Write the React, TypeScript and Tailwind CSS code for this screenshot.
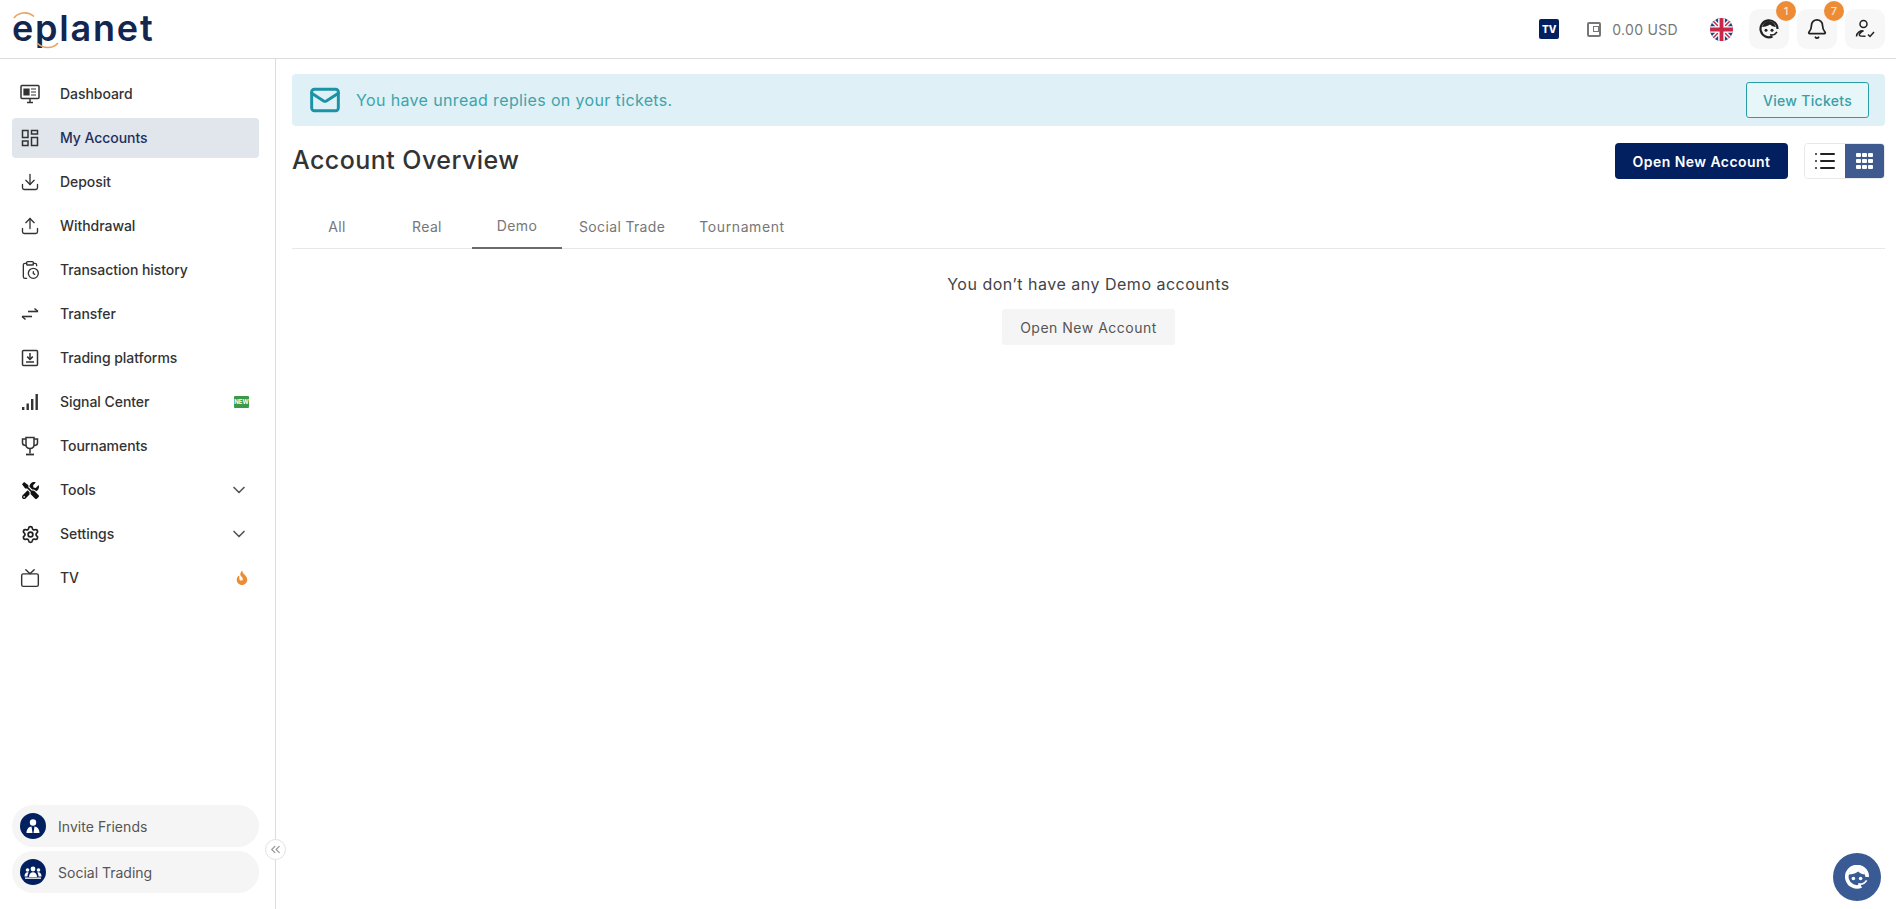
import { ChevronDown, ChevronsLeft, Download, Upload, ClipboardClock, Settings, Tv, Mail, List, Bell } from "lucide-react";
import { FaTools, FaFire } from "react-icons/fa";

const DashIcon = () => (
  <svg width="20" height="20" viewBox="0 0 20 20" fill="none" stroke="#333" strokeWidth="1.5">
    <rect x="1" y="1.5" width="18" height="13" rx="1" />
    <path d="M7 18.500h6M10 15v3" />
    <path d="M4 5h5v6H4z M11 5h5 M11 8h5 M11 11h5" fill="#333" strokeWidth="1.2" />
  </svg>
);

const AccountsIcon = () => (
  <svg width="18" height="18" viewBox="0 0 18 18" fill="none" stroke="#333" strokeWidth="1.5">
    <rect x="1.500" y="1.500" width="5.500" height="7" />
    <rect x="10.500" y="1.500" width="6" height="3.500" />
    <rect x="1.500" y="12" width="5.500" height="4.500" />
    <rect x="10.500" y="8.500" width="6" height="8" />
  </svg>
);

const TransferIcon = () => (
  <svg width="18" height="14" viewBox="0 0 18 14" fill="none" stroke="#333" strokeWidth="1.600">
    <path d="M7 4.500h10" />
    <path d="M13.500 1.500l3.500 3" />
    <path d="M1 9.500h10" />
    <path d="M4.500 12.500l-3.500-3" />
  </svg>
);

const PlatformIcon = () => (
  <svg width="18" height="18" viewBox="0 0 18 18" fill="none" stroke="#333" strokeWidth="1.500">
    <rect x="1.500" y="1.500" width="15" height="15" rx="1" />
    <path d="M9 4v6" />
    <path d="M6.200 7.600L9 10.400l2.800-2.800" />
    <path d="M5 13h8" />
  </svg>
);

const SignalBars = () => (
  <svg width="18" height="18" viewBox="0 0 18 18" fill="#333">
    <rect x="1" y="14" width="2.400" height="3" />
    <rect x="5.500" y="10.500" width="2.400" height="6.500" />
    <rect x="10" y="6" width="2.400" height="11" />
    <rect x="14.500" y="1" width="2.400" height="16" />
  </svg>
);

const TrophyIcon = () => (
  <svg width="18" height="20" viewBox="0 0 18 20" fill="none" stroke="#333" strokeWidth="1.500">
    <path d="M5 1.500h8v7c0 2.400-1.800 4-4 4s-4-1.600-4-4z" />
    <path d="M5 3H1.500v4c0 1.500 1.500 2.500 3.500 2.500" />
    <path d="M13 3h3.500v4c0 1.500-1.500 2.500-3.500 2.500" />
    <path d="M9 12.500v5" />
    <path d="M5 18.500h8" strokeWidth="1.800" />
  </svg>
);

const NewBadge = () => (
  <span className="flex h-[12px] w-[15px] items-center justify-center rounded-[1px] bg-[#3a9a4a] text-[6px] font-bold leading-none text-white">
    NEW
  </span>
);

const FlagIcon = () => (
  <svg width="23" height="23" viewBox="0 0 24 24">
    <defs>
      <clipPath id="flagClip">
        <circle cx="12" cy="12" r="12" />
      </clipPath>
    </defs>
    <g clipPath="url(#flagClip)">
      <rect width="24" height="24" fill="#2a3f7e" />
      <path d="M0 0L24 24M24 0L0 24" stroke="#fff" strokeWidth="4.500" />
      <path d="M0 0L24 24M24 0L0 24" stroke="#c8274a" strokeWidth="1.600" />
      <path d="M12 0v24M0 12h24" stroke="#fff" strokeWidth="7" />
      <path d="M12 0v24M0 12h24" stroke="#c8274a" strokeWidth="4" />
    </g>
  </svg>
);

const AgentFace = ({ color, size, weight }: { color: string; size: number; weight: number }) => (
  <svg width={size} height={size} viewBox="0 0 20 20">
    <path d="M13.500 17.500A8.500 8.500 0 1 1 18.500 10" fill="none" stroke={color} strokeWidth={weight} />
    <path d="M3 8c1.500-4 4-6 7-6s5.500 2 7 6c-2.500 0-4.500-1-6-2.500C9 7 6 8 3 8z" fill={color} />
    <circle cx="7" cy="11.300" r="1.500" fill={color} />
    <circle cx="13" cy="11.300" r="1.500" fill={color} />
    <path d="M11 15.800c3 .6 5.500-.6 7-3" fill="none" stroke={color} strokeWidth="1.500" />
  </svg>
);

const UserCheck = () => (
  <svg width="22" height="22" viewBox="0 0 22 22" fill="none" stroke="#222" strokeWidth="1.500">
    <circle cx="9.500" cy="6" r="3.500" />
    <path d="M2.500 18.500c0-4 3.500-6 7-5.600-2 .8-5 3-4 4.600 1 .8 5 .7 6 .7" />
    <path d="M14 16.500l2 2 4-4.500" />
  </svg>
);

const InviteIcon = () => (
  <svg width="16" height="16" viewBox="0 0 16 16" fill="#fff">
    <circle cx="8" cy="4.500" r="3.200" />
    <path d="M1.500 15c0-4 2.500-6.200 5-6.400L7.500 15zM14.500 15c0-4-2.500-6.200-5-6.400L8.500 15z" />
  </svg>
);

const SocialIcon = () => (
  <svg width="18" height="16" viewBox="0 0 18 16" fill="#fff">
    <circle cx="9" cy="5" r="2.400" />
    <circle cx="3.500" cy="6" r="1.800" />
    <circle cx="14.500" cy="6" r="1.800" />
    <path d="M5 13c0-3 1.800-4.800 4-4.800s4 1.800 4 4.800z" />
    <path d="M0.500 12.500c0-2.600 1.200-4.300 3-4.300.5 0 .9.100 1.200.3-.8 1-1.200 2.400-1.200 4z" />
    <path d="M17.500 12.500c0-2.600-1.200-4.300-3-4.300-.5 0-.9.100-1.200.3.8 1 1.200 2.400 1.200 4z" />
    <rect x="1" y="13.500" width="16" height="1.300" />
  </svg>
);

const navItems = [
  { label: "Dashboard", icon: <DashIcon /> },
  { label: "My Accounts", icon: <AccountsIcon />, active: true },
  { label: "Deposit", icon: <Download size={20} strokeWidth={1.6} color="#333" /> },
  { label: "Withdrawal", icon: <Upload size={20} strokeWidth={1.6} color="#333" /> },
  { label: "Transaction history", icon: <ClipboardClock size={20} strokeWidth={1.6} color="#333" /> },
  { label: "Transfer", icon: <TransferIcon /> },
  { label: "Trading platforms", icon: <PlatformIcon /> },
  { label: "Signal Center", icon: <SignalBars />, right: <NewBadge /> },
  { label: "Tournaments", icon: <TrophyIcon /> },
  { label: "Tools", icon: <FaTools size={17} color="#111" />, right: <ChevronDown size={20} color="#555" /> },
  { label: "Settings", icon: <Settings size={19} strokeWidth={2.2} color="#222" />, right: <ChevronDown size={20} color="#555" /> },
  { label: "TV", icon: <Tv size={20} strokeWidth={1.7} color="#333" />, right: <FaFire size={14} color="#ee8c36" /> },
];

const tabs = ["All", "Real", "Demo", "Social Trade", "Tournament"];

export default function App() {
  return (
    <div className="flex h-screen flex-col overflow-hidden bg-white font-['Inter','Noto_Sans',sans-serif] text-[#333]">
      <header className="flex h-[59px] shrink-0 items-center justify-between border-b border-[#dcdcdc] pl-3 pr-[11px]">
        <div className="relative flex h-[58px] items-center">
          <span className="pb-[2px] text-[36px] font-semibold leading-none tracking-[1.8px] text-[#12264f]">eplanet</span>
          <svg className="absolute left-0 top-0" width="60" height="58" viewBox="0 0 60 58" fill="none" stroke="#e9a35f" strokeWidth="1.600">
            <path d="M2 18C6 12 16 11 22 16.500" />
            <path d="M25 43C31 49 41 49 46 43" />
          </svg>
        </div>
        <div className="flex items-center">
          <span className="flex h-5 w-5 items-center justify-center rounded-[2px] bg-[#02205f] text-[10px] font-extrabold leading-none text-white">TV</span>
          <span className="ml-[28px] flex h-[15px] w-[14px] items-center justify-center rounded-[2px] border-2 border-[#777]">
            <span className="ml-[4px] h-[6px] w-[6px] border border-[#777]" />
          </span>
          <span className="ml-[11px] text-[14px] tracking-[0.3px] text-[#777]">0.00 USD</span>
          <span className="ml-[32px] flex"><FlagIcon /></span>
          <div className="ml-[16px] flex gap-2">
            <button className="relative flex h-10 w-10 items-center justify-center rounded-[10px] bg-[#f7f7f7]">
              <AgentFace color="#222" size={20} weight={2.2} />
              <span className="absolute -right-[7px] -top-[8px] flex h-5 w-5 items-center justify-center rounded-full bg-[#ee8c36] text-[11px] font-medium text-[#fbe3cc]">1</span>
            </button>
            <button className="relative flex h-10 w-10 items-center justify-center rounded-[10px] bg-[#f7f7f7]">
              <Bell size={22} strokeWidth={1.9} color="#222" />
              <span className="absolute -right-[7px] -top-[8px] flex h-5 w-5 items-center justify-center rounded-full bg-[#ee8c36] text-[11px] font-medium text-[#fbe3cc]">7</span>
            </button>
            <button className="flex h-10 w-10 items-center justify-center rounded-[10px] bg-[#f7f7f7]">
              <UserCheck />
            </button>
          </div>
        </div>
      </header>

      <div className="flex min-h-0 flex-1">
        <aside className="relative flex w-[276px] shrink-0 flex-col justify-between border-r border-[#dcdcdc] pb-[16px] pl-3 pr-4 pt-[15px]">
          <nav className="flex flex-col gap-1">
            {navItems.map((item) => (
              <a
                key={item.label}
                className={`flex h-10 items-center rounded-[4px] pr-[10px] ${item.active ? "bg-[#e1e5ec] text-[#1f2f5f]" : "text-[#333]"}`}
              >
                <span className="flex w-[36px] justify-center">{item.icon}</span>
                <span className="ml-[12px] -translate-y-[1px] flex-1 text-[14px] font-[450] tracking-[-0.05px]">{item.label}</span>
                {item.right}
              </a>
            ))}
          </nav>
          <div className="flex flex-col gap-[4px]">
            <a className="flex h-[42px] items-center rounded-full bg-[#f5f5f5] pl-2">
              <span className="flex h-[26px] w-[26px] items-center justify-center rounded-full bg-[#02205f]"><InviteIcon /></span>
              <span className="ml-[12px] text-[14px] tracking-[0.05px] text-[#555]">Invite Friends</span>
            </a>
            <a className="flex h-[42px] items-center rounded-full bg-[#f5f5f5] pl-2">
              <span className="flex h-[26px] w-[26px] items-center justify-center rounded-full bg-[#02205f]"><SocialIcon /></span>
              <span className="ml-[12px] text-[14px] text-[#555]">Social Trading</span>
            </a>
          </div>
          <button className="absolute -right-[11px] bottom-[49px] flex h-[21px] w-[21px] items-center justify-center rounded-full border border-[#e2e2e2] bg-white">
            <ChevronsLeft size={15} color="#999" />
          </button>
        </aside>

        <main className="relative min-w-0 flex-1 pl-4 pr-[11px] pt-[15px]">
          <div className="flex h-[52px] items-center justify-between rounded-[4px] bg-[#dff0f6] pl-[17px] pr-[16px]">
            <div className="flex items-center">
              <Mail size={32} strokeWidth={2.2} color="#1b93a6" />
              <span className="ml-[15px] text-[16px] tracking-[0.36px] text-[#3ba5ab]">You have unread replies on your tickets.</span>
            </div>
            <button className="flex h-9 w-[123px] items-center justify-center rounded-[3px] border border-[#2b9ea5] bg-[#e6f6f9] text-[14px] font-medium tracking-[0.3px] text-[#3a9ea6]">
              View Tickets
            </button>
          </div>

          <div className="mt-[17px] flex h-9 items-center justify-between">
            <h1 className="text-[25px] font-medium tracking-[0.45px] text-[#333]">Account Overview</h1>
            <div className="flex items-center">
              <button className="flex h-9 w-[173px] items-center justify-center rounded-[4px] bg-[#02205f] text-[14px] font-semibold tracking-[0.45px] text-white">
                Open New Account
              </button>
              <div className="ml-4 flex h-9 w-[81px] overflow-hidden rounded-[4px] border border-[#e8e8e8]">
                <span className="flex flex-1 items-center justify-center bg-white"><List size={24} strokeWidth={2} color="#222" /></span>
                <span className="flex flex-1 items-center justify-center bg-[#3e5a8f]">
                  <span className="grid grid-cols-3 gap-[1.5px]">
                    {Array.from({ length: 9 }).map((_, i) => (
                      <span key={i} className="h-[4.500px] w-[4.500px] rounded-[1px] bg-white" />
                    ))}
                  </span>
                </span>
              </div>
            </div>
          </div>

          <div className="mt-[29px] flex h-[41px] border-b border-[#e8e8e8]">
            {tabs.map((tab) => (
              <button
                key={tab}
                className={`-mb-px min-w-[90px] px-[17px] pb-[5px] text-[14px] text-[#777] ${tab === "Tournament" ? "tracking-[0.6px]" : "tracking-[0.35px]"} ${tab === "Demo" ? "border-b-2 border-[#6b6b6b]" : ""}`}
              >
                {tab}
              </button>
            ))}
          </div>

          <div className="flex flex-col items-center">
            <p className="-mt-px pt-[26px] text-[16px] leading-[20px] tracking-[0.5px] text-[#444]">You don’t have any Demo accounts</p>
            <button className="mt-[15px] flex h-9 w-[173px] items-center justify-center rounded-[3px] bg-[#f5f5f5] text-[14px] tracking-[0.5px] text-[#555]">
              Open New Account
            </button>
          </div>

          <button className="absolute bottom-[8px] right-[15px] flex h-12 w-12 items-center justify-center rounded-full bg-[#3a5a94]">
            <AgentFace color="#fff" size={24} weight={3} />
          </button>
        </main>
      </div>
    </div>
  );
}
